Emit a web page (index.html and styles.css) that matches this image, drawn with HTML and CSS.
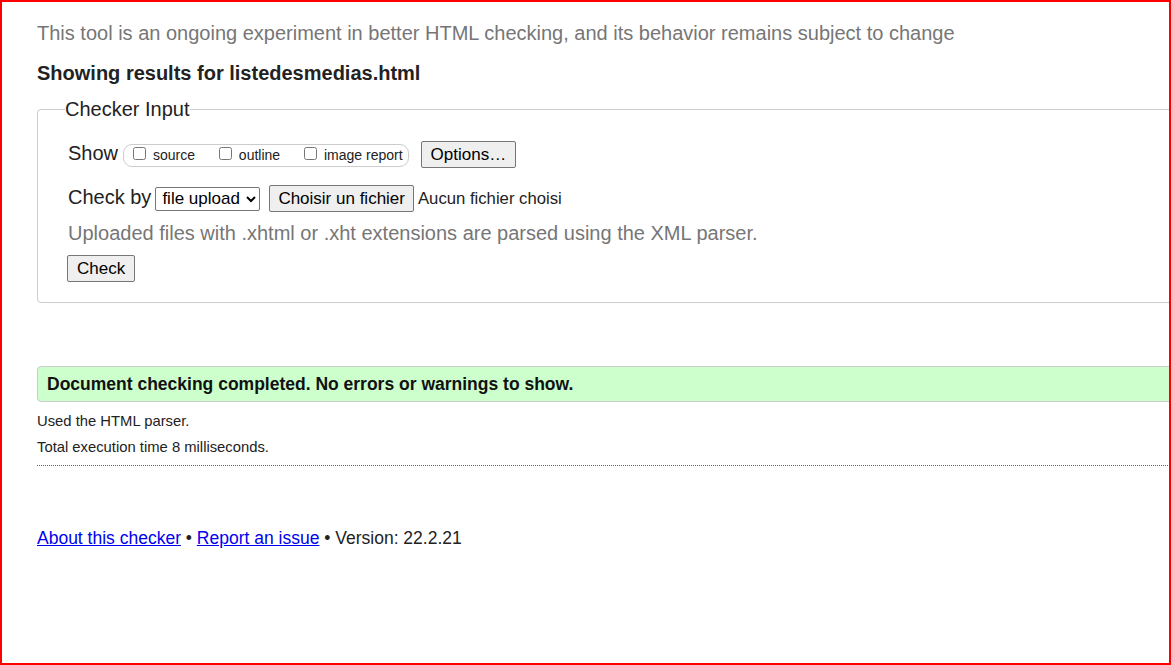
FILE: index.html
```html
<!DOCTYPE html>
<html lang="en">
<head>
<meta charset="utf-8">
<title>Nu Html Checker</title>
<link rel="stylesheet" href="styles.css">
</head>
<body>
<div class="frame">
  <div class="page">
    <p class="intro">This tool is an ongoing experiment in better HTML checking, and its behavior remains subject to change</p>
    <h2 class="title">Showing results for listedesmedias.html</h2>
    <fieldset class="checker">
      <legend>Checker Input</legend>
      <div class="row row-show">
        <span class="lbl">Show</span>
        <span class="group"><label class="opt"><input type="checkbox"> source</label><label class="opt"><input type="checkbox"> outline</label><label class="opt last"><input type="checkbox"> image report</label></span>
        <button type="button" class="btn btn-options">Options…</button>
      </div>
      <div class="row row-check">
        <span class="lbl">Check by</span>
        <select class="sel"><option>file upload</option></select>
        <button type="button" class="btn btn-file">Choisir un fichier</button>
        <span class="nofile">Aucun fichier choisi</span>
      </div>
      <p class="hint">Uploaded files with .xhtml or .xht extensions are parsed using the XML parser.</p>
      <div class="row row-submit">
        <button type="button" class="btn btn-check">Check</button>
      </div>
    </fieldset>
    <div class="success">Document checking completed. No errors or warnings to show.</div>
    <p class="meta">Used the HTML parser.</p>
    <p class="meta">Total execution time 8 milliseconds.</p>
    <hr class="sep">
    <p class="footer"><a href="#">About this checker</a> • <a href="#">Report an issue</a> • Version: 22.2.21</p>
  </div>
</div>
</body>
</html>
```

FILE: styles.css
```css
html, body {
  margin: 0;
  padding: 0;
  background: #fff;
}

body {
  font-family: "Liberation Sans", Arial, sans-serif;
  color: #222;
}

.frame {
  width: 1171px;
  height: 665px;
  box-sizing: border-box;
  border: 2px solid #ff0000;
  overflow: hidden;
}

.page {
  width: 1300px;
  padding: 20px 0 0 35px;
}

.intro {
  margin: 0;
  font-size: 20px;
  line-height: 23px;
  color: #767676;
}

.title {
  margin: 17px 0 0;
  font-size: 20px;
  line-height: 22px;
  font-weight: bold;
  color: #222;
}

.checker {
  margin: 14px 0 0;
  padding: 20px 0 20px 30px;
  border: 1px solid #cccccc;
  border-radius: 4px;
  min-width: 0;
}

.checker legend {
  padding: 0;
  margin-left: -3px;
  font-size: 20px;
  line-height: 23px;
  color: #222;
}

.row {
  display: flex;
  align-items: baseline;
}

.lbl {
  font-size: 20px;
  line-height: 23px;
  color: #222;
}

.row-show .lbl {
  margin-right: 5px;
}

.group {
  display: inline-block;
  border: 1px solid #cccccc;
  border-radius: 9px;
  padding: 0 5px 0 5px;
  font-size: 14px;
  line-height: 21px;
  color: #222;
}

.opt {
  margin-right: 20px;
}

.opt.last {
  margin-right: 0;
}

.opt input {
  margin: 0 3px 2px 4px;
  width: 13px;
  height: 13px;
  vertical-align: baseline;
}

.btn {
  font-family: "Liberation Sans", Arial, sans-serif;
  font-size: 17px;
  line-height: 19px;
  color: #000;
  background: #efefef;
  border: 1px solid #767676;
  border-radius: 2px;
  padding: 3px 9px;
  margin: 0;
}

.btn-options {
  margin-left: 12px;
  padding: 3px 9px;
}

.row-check {
  margin-top: 17px;
}

.row-check .lbl {
  margin-right: 4px;
}

.sel {
  font-family: "Liberation Sans", Arial, sans-serif;
  font-size: 17px;
  color: #000;
  height: 24px;
  width: 105px;
  margin: 0;
  padding: 0 0 0 2px;
  border: 1px solid #767676;
  border-radius: 2px;
  background: #fff;
}

.btn-file {
  margin-left: 9px;
  padding: 3px 8px;
}

.nofile {
  margin-left: 4px;
  font-size: 16.7px;
  color: #222;
}

.hint {
  margin: 10px 0 0;
  font-size: 20px;
  line-height: 23px;
  color: #767676;
}

.row-submit {
  margin-top: 10px;
  margin-left: -1px;
}

.btn-check {
  padding: 3px 9px;
}

.success {
  margin-top: 63px;
  height: 34px;
  line-height: 34px;
  padding-left: 9px;
  border: 1px solid #cccccc;
  border-radius: 4px;
  background: #ccffcc;
  font-size: 17.5px;
  font-weight: bold;
  color: #111;
}

.meta {
  margin: 0;
  font-size: 14.8px;
  line-height: 26px;
  color: #222;
}

.success + .meta {
  margin-top: 6px;
}

.sep {
  margin: 5px 0 0;
  width: 1131px;
  height: 0;
  border: 0;
  border-top: 1px dotted #666;
}

.footer {
  margin: 62px 0 0;
  font-size: 17.5px;
  line-height: 21px;
  color: #222;
}

.footer a {
  color: #0000ee;
  text-decoration: underline;
}
```
